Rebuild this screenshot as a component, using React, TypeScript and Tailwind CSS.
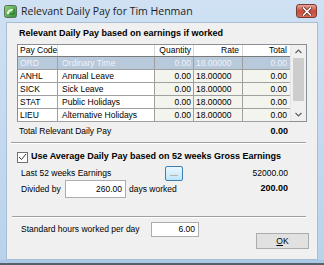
import React from 'react';

const rows = [
  { code: 'ORD', desc: 'Ordinary Time', qty: '0.00', rate: '18.00000', total: '0.00', selected: true },
  { code: 'ANHL', desc: 'Annual Leave', qty: '0.00', rate: '18.00000', total: '0.00' },
  { code: 'SICK', desc: 'Sick Leave', qty: '0.00', rate: '18.00000', total: '0.00' },
  { code: 'STAT', desc: 'Public Holidays', qty: '0.00', rate: '18.00000', total: '0.00' },
  { code: 'LIEU', desc: 'Alternative Holidays', qty: '0.00', rate: '18.00000', total: '0.00' },
];

function TitleIcon() {
  return (
    <svg width="13" height="13" viewBox="0 0 13 13">
      <defs>
        <linearGradient id="ig" x1="0" y1="0" x2="1" y2="1">
          <stop offset="0" stopColor="#8fd47a" />
          <stop offset="1" stopColor="#2f8f3a" />
        </linearGradient>
      </defs>
      <rect x="0.5" y="0.5" width="12" height="12" rx="2" fill="url(#ig)" stroke="#5a6f5a" />
      <path d="M3 9 C3 5 6 3.5 9.5 4 L8 6 C6 6 5 7 5 9 Z" fill="#e9f7e4" />
      <path d="M10 4 L10 9 L5.5 9" fill="none" stroke="#1f6a28" strokeWidth="1" />
    </svg>
  );
}

function CloseButton() {
  return (
    <div className="mt-[4px] mr-[7px] flex h-[14px] w-[21px] items-center justify-center rounded-[3px] border border-[#7a3b33] bg-gradient-to-b from-[#e6a699] via-[#c9493b] to-[#d46a55]">
      <svg width="10" height="9" viewBox="0 0 10 9">
        <path d="M1.5 1 L8.5 8 M8.5 1 L1.5 8" stroke="#5b2620" strokeWidth="3" strokeLinecap="square" />
        <path d="M1.5 1 L8.5 8 M8.5 1 L1.5 8" stroke="#ffffff" strokeWidth="1.6" strokeLinecap="square" />
      </svg>
    </div>
  );
}

function Separator() {
  return <div className="h-[2px] border-t border-b border-t-[#a0a0a0] border-b-white" />;
}

export default function App() {
  return (
    <div className="flex h-[265px] w-[324px] flex-col overflow-hidden whitespace-nowrap bg-gradient-to-b from-[#cfe1f3] to-[#b9d2ec] font-['Liberation_Sans',Arial,sans-serif] text-[8.5px] text-black">
      {/* title bar */}
      <div className="flex h-[22px] shrink-0 items-start">
        <div className="ml-[4px] mt-[5px]">
          <TitleIcon />
        </div>
        <div className="ml-[4px] mt-[4px] font-['Open_Sans',sans-serif] text-[10.5px] leading-[14px] text-[#1e1e1e]">
          Relevant Daily Pay for Tim Henman
        </div>
        <div className="ml-auto">
          <CloseButton />
        </div>
      </div>

      {/* client area */}
      <div className="mx-[6px] flex h-[238px] shrink-0 flex-col border border-[#aabdd2] bg-[#f0f0f0]">
        <div className="mt-[5px] pl-[12px] text-[9px] font-bold leading-[11px]">
          Relevant Daily Pay based on earnings if worked
        </div>

        {/* grid */}
        <div className="ml-[10px] mt-[5px] flex h-[78px] w-[290px] border border-[#8a8f96] bg-white">
          <div className="flex w-[272px] flex-col">
            <div className="flex h-[12px] border-b border-[#7a7a7a] bg-white leading-[11px]">
              <div className="w-[40px] overflow-hidden border-r border-[#d6d6d6] pl-[2px]">Pay Code</div>
              <div className="w-[97px] border-r border-[#d6d6d6]" />
              <div className="w-[39px] border-r border-[#d6d6d6] pr-[2px] text-right">Quantity</div>
              <div className="w-[49px] border-r border-[#d6d6d6] pr-[3px] text-right">Rate</div>
              <div className="w-[47px] pr-[3px] text-right">Total</div>
            </div>
            {rows.map((r) => (
              <div
                key={r.code}
                className={`flex h-[13px] border-b border-[#a0a0a0] leading-[12px] ${
                  r.selected ? 'bg-[#b8c9dc] text-[#eef3f8]' : ''
                }`}
              >
                <div className={`w-[40px] border-r border-[#a0a0a0] pl-[2px] ${r.selected ? '' : 'bg-white'}`}>{r.code}</div>
                <div className={`w-[97px] border-r border-[#a0a0a0] pl-[4px] ${r.selected ? '' : 'bg-white'}`}>{r.desc}</div>
                <div className={`w-[39px] border-r border-[#a0a0a0] pr-[2px] text-right ${r.selected ? '' : 'bg-[#f4f4ee]'}`}>{r.qty}</div>
                <div className={`w-[49px] border-r border-[#a0a0a0] pl-[2px] ${r.selected ? '' : 'bg-[#f4f4ee]'}`}>{r.rate}</div>
                <div className={`w-[47px] pr-[3px] text-right ${r.selected ? '' : 'bg-[#f4f4ee]'}`}>{r.total}</div>
              </div>
            ))}
          </div>
          {/* scrollbar */}
          <div className="flex w-[16px] flex-col border-l border-[#e6e6e6] bg-[#f0f0f0]">
            <div className="flex h-[13px] items-center justify-center">
              <svg width="7" height="5" viewBox="0 0 7 5">
                <path d="M0.5 4 L3.5 1 L6.5 4" fill="none" stroke="#606060" strokeWidth="1.2" />
              </svg>
            </div>
            <div className="mx-[2px] h-[43px] bg-[#cdcdcd]" />
            <div className="flex-1" />
            <div className="flex h-[13px] items-center justify-center">
              <svg width="7" height="5" viewBox="0 0 7 5">
                <path d="M0.5 1 L3.5 4 L6.5 1" fill="none" stroke="#606060" strokeWidth="1.2" />
              </svg>
            </div>
          </div>
        </div>

        <div className="mt-[4px] flex h-[11px] items-center pl-[12px] pr-[29px] leading-[11px]">
          <span>Total Relevant Daily Pay</span>
          <span className="ml-auto text-[9px] font-bold">0.00</span>
        </div>

        <div className="ml-[4px] mr-[11px] mt-[5px]">
          <Separator />
        </div>

        <div className="mt-[7px] flex h-[12px] items-center pl-[10px]">
          <div className="flex h-[11px] w-[11px] items-center justify-center border border-[#707070] bg-white">
            <svg width="9" height="8" viewBox="0 0 9 8">
              <path d="M1 4 L3.5 6.5 L8 1" fill="none" stroke="#3a3a3a" strokeWidth="1" />
            </svg>
          </div>
          <span className="ml-[3px] text-[9px] font-bold">Use Average Daily Pay based on 52 weeks Gross Earnings</span>
        </div>

        <div className="mt-[3px] flex h-[15px] items-center pl-[14px] pr-[29px]">
          <span className="w-[144px]">Last 52 weeks Earnings</span>
          <div className="flex h-[15px] w-[18px] items-end justify-center rounded-[2px] border border-[#3c7fb1] bg-gradient-to-b from-[#eaf6fd] to-[#bee6fd] pb-[3px] text-[7px] leading-[7px] text-[#333]">
            ....
          </div>
          <span className="ml-auto">52000.00</span>
        </div>

        <div className="mt-[-1px] flex h-[18px] items-center pl-[14px] pr-[29px]">
          <span className="w-[44px]">Divided by</span>
          <div className="flex h-[18px] w-[61px] items-center justify-end border border-[#abadb3] bg-white pr-[3px]">260.00</div>
          <span className="ml-[3px]">days worked</span>
          <span className="ml-auto text-[9px] font-bold">200.00</span>
        </div>

        <div className="ml-[5px] mr-[11px] mt-[18px]">
          <Separator />
        </div>

        <div className="flex flex-1">
          <div className="mt-[4px] flex h-[15px] items-center pl-[14px]">
            <span className="w-[130px]">Standard hours worked per day</span>
            <div className="flex h-[15px] w-[48px] items-center justify-end border border-[#abadb3] bg-white pr-[3px]">6.00</div>
          </div>
          <div className="ml-auto mr-[8px] mt-[15px] flex h-[16px] w-[53px] items-center justify-center border border-[#acacac] bg-[#e1e1e1]">
            <span>
              <span className="underline">O</span>K
            </span>
          </div>
        </div>
      </div>

      <div className="h-[3px] shrink-0 bg-[#a9c9e8]" />
      <div className="flex-1 bg-[#5a6068]" />
    </div>
  );
}
